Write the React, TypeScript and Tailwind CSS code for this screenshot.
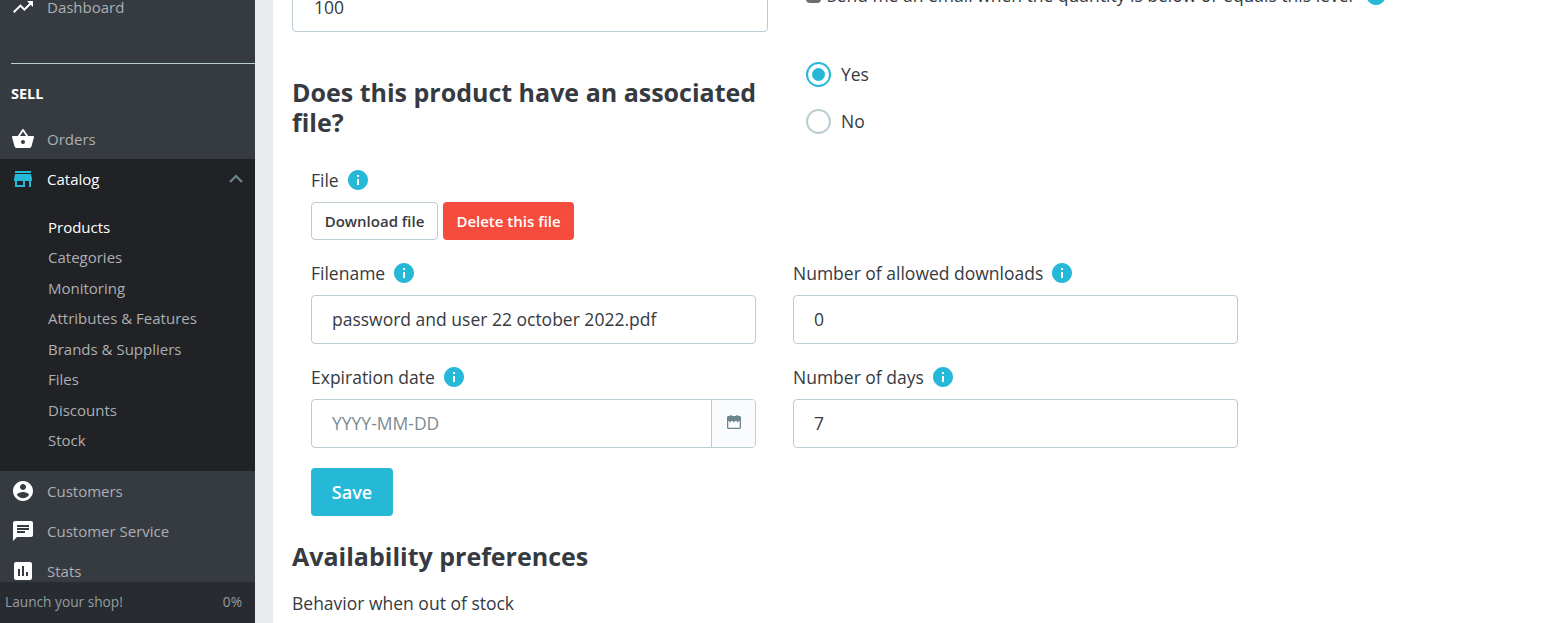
import React from "react";

const Icon = ({ d, className = "" }: { d: string; className?: string }) => (
  <svg viewBox="0 0 24 24" className={className} fill="currentColor"><path d={d} /></svg>
);

const I = {
  trend: "M16 6l2.29 2.29-4.88 4.88-4-4L2 16.59 3.41 18l6-6 4 4 6.3-6.29L22 12V6z",
  basket: "M17.21 9l-4.38-6.56c-.19-.28-.51-.42-.83-.42-.32 0-.64.14-.83.43L6.79 9H2c-.55 0-1 .45-1 1 0 .09.01.18.04.27l2.54 9.27c.23.84 1 1.46 1.92 1.46h13c.92 0 1.69-.62 1.93-1.46l2.54-9.27L23 10c0-.55-.45-1-1-1h-4.79zM9 9l3-4.4L15 9H9zm3 8c-1.1 0-2-.9-2-2s.9-2 2-2 2 .9 2 2-.9 2-2 2z",
  store: "M20 4H4v2h16V4zm1 10v-2l-1-5H4l-1 5v2h1v6h10v-6h4v6h2v-6h1zm-9 4H6v-4h6v4z",
  user: "M12 2C6.48 2 2 6.48 2 12s4.48 10 10 10 10-4.48 10-10S17.52 2 12 2zm0 3c1.66 0 3 1.34 3 3s-1.34 3-3 3-3-1.34-3-3 1.34-3 3-3zm0 14.2c-2.5 0-4.71-1.28-6-3.22.03-1.99 4-3.08 6-3.08 1.99 0 5.97 1.09 6 3.08-1.29 1.94-3.5 3.22-6 3.22z",
  chat: "M20 2H4c-1.1 0-1.99.9-1.99 2L2 22l4-4h14c1.1 0 2-.9 2-2V4c0-1.1-.9-2-2-2zM6 9h12v2H6V9zm8 5H6v-2h8v2zm4-6H6V6h12v2z",
  stats: "M19 3H5c-1.1 0-2 .9-2 2v14c0 1.1.9 2 2 2h14c1.1 0 2-.9 2-2V5c0-1.1-.9-2-2-2zM9 17H7v-7h2v7zm4 0h-2V7h2v10zm4 0h-2v-4h2v4z",
  info: "M12 2C6.48 2 2 6.48 2 12s4.48 10 10 10 10-4.48 10-10S17.52 2 12 2zm1 15h-2v-6h2v6zm0-8h-2V7h2v2z",
};

const Nav = ({ icon, label }: { icon: string; label: string }) => (
  <div className="flex h-10 items-center pl-[11px] shrink-0">
    <Icon d={icon} className="w-6 h-6 text-white mr-3 shrink-0" />
    <span className="text-[15px] leading-none text-[#adafb1]">{label}</span>
  </div>
);

const Sub = ({ label, active }: { label: string; active?: boolean }) => (
  <div className={`h-[30.45px] flex items-center pl-12 text-[15px] ${active ? "text-white font-medium" : "text-[#adafb1]"}`}>{label}</div>
);

const Info = ({ className = "" }: { className?: string }) => (
  <Icon d={I.info} className={`w-6 h-6 text-[#25b9d7] ${className}`} />
);

const Label = ({ text }: { text: string }) => (
  <div className="flex items-center h-6 text-[17.5px] text-[#363a41]">
    <span>{text}</span>
    <Info className="ml-[7px]" />
  </div>
);

const Field = ({ value }: { value: string }) => (
  <div className="h-[49px] w-[445px] rounded border border-[#bbcdd2] flex items-center pl-[20px] text-[17.5px] text-[#363a41]">{value}</div>
);

const Radio = ({ on, label }: { on?: boolean; label: string }) => (
  <div className="flex items-center h-[25px]">
    <div className={`w-[25px] h-[25px] rounded-full border-2 flex items-center justify-center ${on ? "border-[#25b9d7]" : "border-[#bbcdd2]"}`}>
      {on && <div className="w-[13px] h-[13px] rounded-full bg-[#25b9d7]" />}
    </div>
    <span className="ml-[10px] text-[17.5px] text-[#363a41]">{label}</span>
  </div>
);

export default function App() {
  return (
    <div className="flex h-[623px] w-[1567px] overflow-hidden bg-white font-['Open_Sans',sans-serif]">
      <aside className="w-[255px] shrink-0 h-full bg-[#363a41] flex flex-col overflow-hidden">
        <div className="h-[582px] overflow-hidden shrink-0">
          <div className="-mt-[13px]">
            <Nav icon={I.trend} label="Dashboard" />
            <div className="h-[36px]" />
            <div className="ml-[11px] h-px bg-[#bbcdd2]" />
            <div className="h-[55px] pt-[4px] flex items-center pl-[11px] text-[14.5px] font-bold text-white">SELL</div>
            <Nav icon={I.basket} label="Orders" />
            <div className="bg-[#202226] h-[312px]">
              <div className="flex h-10 items-center pl-[11px] pr-[7px]">
                <Icon d={I.store} className="w-6 h-6 text-[#25b9d7] mr-3 shrink-0" />
                <span className="text-[15px] leading-none font-medium text-white">Catalog</span>
                <svg viewBox="0 0 24 24" className="w-6 h-6 ml-auto text-[#6c868e]" fill="none" stroke="currentColor" strokeWidth="2.2"><path d="M6 15l6-6 6 6" /></svg>
              </div>
              <div className="pt-[13px]">
                <Sub label="Products" active />
                <Sub label="Categories" />
                <Sub label="Monitoring" />
                <Sub label="Attributes & Features" />
                <Sub label="Brands & Suppliers" />
                <Sub label="Files" />
                <Sub label="Discounts" />
                <Sub label="Stock" />
              </div>
            </div>
            <Nav icon={I.user} label="Customers" />
            <Nav icon={I.chat} label="Customer Service" />
            <Nav icon={I.stats} label="Stats" />
          </div>
        </div>
        <div className="flex-1 bg-[#282b30] flex items-center justify-between pl-[5px] pr-[13px] text-[13.7px] text-[#949da2]">
          <span>Launch your shop!</span>
          <span>0%</span>
        </div>
      </aside>
      <div className="w-[18px] shrink-0 bg-[#eaebec]" />
      <main className="flex-1 pl-[19px] overflow-hidden">
        <div className="flex -mt-[17px]">
          <div className="w-[476px] h-[49px] rounded border border-[#bbcdd2] flex items-center pl-[21px] text-[17.5px] text-[#363a41]">100</div>
          <div className="ml-[38px] flex items-center h-6 text-[17.5px] text-[#363a41]">
            <div className="w-[15px] h-[15px] bg-[#6c6c6c] mr-[6px] rounded-sm" />
            <span>Send me an email when the quantity is below or equals this level</span>
            <Info className="ml-[11px]" />
          </div>
        </div>
        <div className="flex mt-[30px]">
          <h2 className="w-[476px] pt-[15px] text-[25px] leading-[30px] font-bold text-[#363a41]">Does this product have an associated file?</h2>
          <div className="ml-[38px] flex flex-col gap-[22px]">
            <Radio on label="Yes" />
            <Radio label="No" />
          </div>
        </div>
        <div className="pl-[19px] mt-[31px]">
          <Label text="File" />
          <div className="flex gap-[5px] mt-[10px]">
            <div className="w-[127px] h-[38px] rounded border border-[#bbcdd2] flex items-center justify-center text-[15px] font-semibold text-[#363a41]">Download file</div>
            <div className="w-[131px] h-[38px] rounded bg-[#f54c3e] flex items-center justify-center text-[15px] font-semibold text-white">Delete this file</div>
          </div>
          <div className="flex gap-[37px] mt-[21px]">
            <div><Label text="Filename" /><div className="mt-[10px]"><Field value="password and user 22 october 2022.pdf" /></div></div>
            <div><Label text="Number of allowed downloads" /><div className="mt-[10px]"><Field value="0" /></div></div>
          </div>
          <div className="flex gap-[37px] mt-[21px]">
            <div>
              <Label text="Expiration date" />
              <div className="mt-[10px] w-[445px] h-[49px] rounded border border-[#bbcdd2] flex overflow-hidden">
                <div className="flex-1 flex items-center pl-[20px] text-[17.5px] text-[#7c8b92]">YYYY-MM-DD</div>
                <div className="w-[44px] pb-[3px] bg-[#fafbfc] border-l border-[#bbcdd2] flex items-center justify-center">
                  <svg viewBox="0 0 14 14" className="w-[14px] h-[14px] text-[#6c868e]">
                    <path fill="currentColor" d="M3 0h1.500v1h5V0H11v1h1.500c.8 0 1.500.7 1.500 1.500v10c0 .8-.7 1.500-1.500 1.500h-11C.7 14 0 13.300 0 12.500v-10C0 1.700.7 1 1.500 1H3zM1.300 6v6.700h11.400V6z" />
                    <path fill="currentColor" d="M2.500 6h1.500v1.300H2.500zM6.200 6h1.500v1.300H6.200zM9.900 6h1.500v1.300H9.900z" />
                  </svg>
                </div>
              </div>
            </div>
            <div><Label text="Number of days" /><div className="mt-[10px]"><Field value="7" /></div></div>
          </div>
          <div className="mt-[20px] w-[82px] h-[48px] rounded bg-[#25b9d7] flex items-center justify-center text-lg font-semibold text-white">Save</div>
        </div>
        <h2 className="mt-[22px] text-[25px] leading-[36px] font-bold text-[#363a41]">Availability preferences</h2>
        <div className="mt-[17px] text-[17.5px] leading-[24px] text-[#363a41]">Behavior when out of stock</div>
      </main>
    </div>
  );
}
